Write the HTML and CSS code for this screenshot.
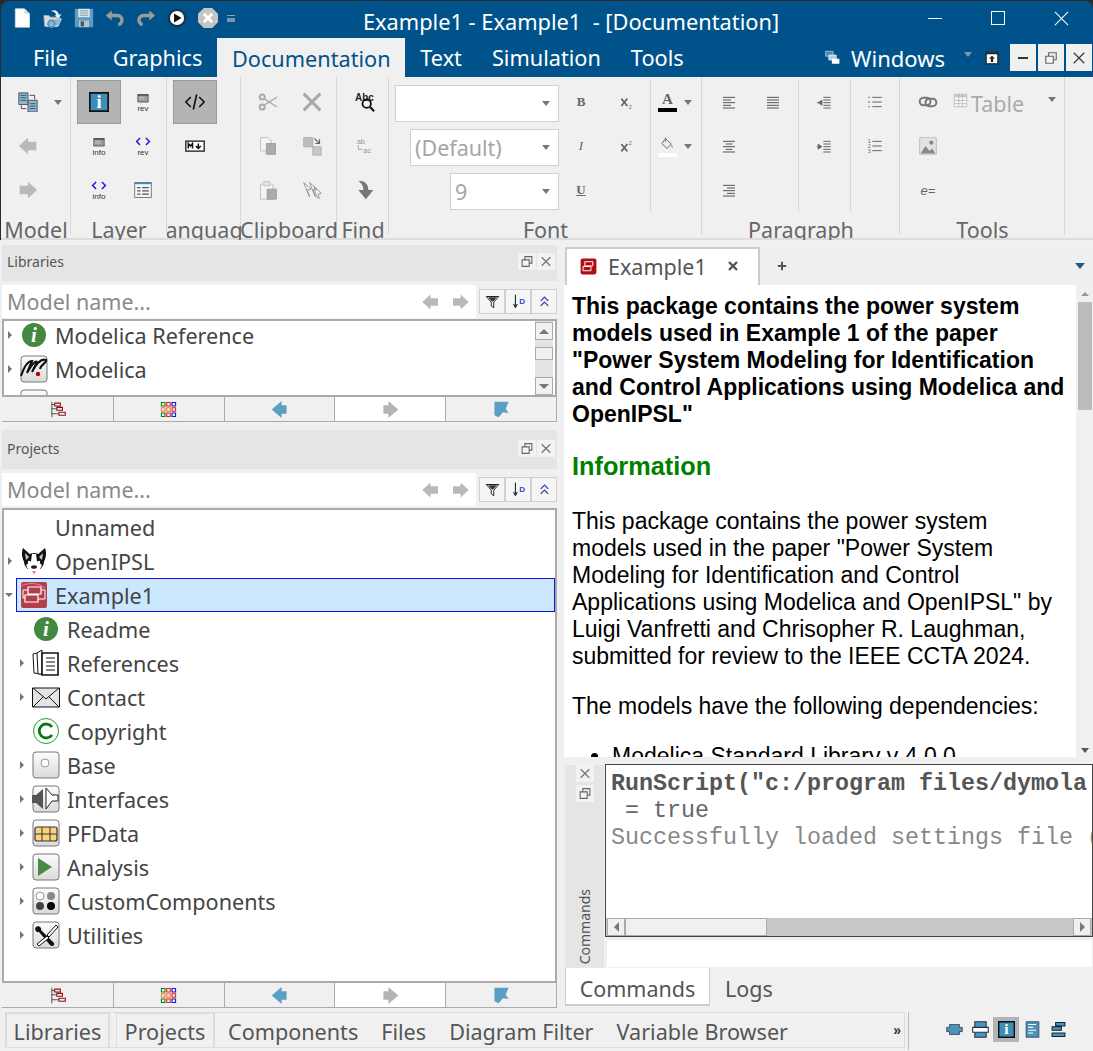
FILE: index.html
```html
<!DOCTYPE html>
<html lang="en">
<head>
<meta charset="utf-8">
<title>Example1 - Example1 - [Documentation]</title>
<link rel="stylesheet" href="styles.css">
</head>
<body>
<svg class="defs" aria-hidden="true">
  <symbol id="new" viewBox="0 0 24 24"><path d="M4 1h11l6 6v16H4z" fill="#fff" stroke="#ddd"/><path d="M15 1v6h6z" fill="#cfd8df"/></symbol>
  <symbol id="open" viewBox="0 0 24 24"><path d="M1 9h6l2 2h8v11H2z" fill="#d8dde0" stroke="#9ab"/><path d="M4 22l3-9h15l-4 9z" fill="#8fb3cc" stroke="#dfe7ec"/><circle cx="10" cy="19" r="4" fill="none" stroke="#4f93bb" stroke-width="2"/><path d="M9 4c5-3 9-1 10 4l3-1-3 6-5-4 2-.5c-1-3-4-5-7-4.500z" fill="#e8eef2"/></symbol>
  <symbol id="save" viewBox="0 0 24 24"><path d="M1 1h22v22H1z" fill="#5b9cc4"/><path d="M5 1h14v10H5z" fill="#dce5eb"/><path d="M7 3h10M7 5h10M7 7h10M7 9h10" stroke="#8aa"/><path d="M6 15h12v8H6z" fill="#b8c4cc"/><path d="M8 16h4v6H8z" fill="#456"/></symbol>
  <symbol id="undo" viewBox="0 0 24 24"><path d="M6 9h9c7 0 7 10 1 11" fill="none" stroke="#9a9a9a" stroke-width="4"/><path d="M1 9l7-6v12z" fill="#9a9a9a"/></symbol>
  <symbol id="redo" viewBox="0 0 24 24"><path d="M18 9H9c-7 0-7 10-1 11" fill="none" stroke="#9a9a9a" stroke-width="4"/><path d="M23 9l-7-6v12z" fill="#9a9a9a"/></symbol>
  <symbol id="play" viewBox="0 0 24 24"><circle cx="12" cy="12" r="11" fill="#16344d"/><circle cx="12" cy="12" r="8.500" fill="#fff"/><path d="M8.500 6.500l9 5.500-9 5.500z" fill="#111"/></symbol>
  <symbol id="stop" viewBox="0 0 24 24"><path d="M7 0h10l7 7v10l-7 7H7l-7-7V7z" fill="#c4c4c4"/><path d="M7 7l10 10M17 7L7 17" stroke="#fff" stroke-width="3.500"/></symbol>
  <symbol id="back" viewBox="0 0 24 24"><path d="M1 12L12 2v5h10v10H12v5z" fill="#b9b9b9"/></symbol>
  <symbol id="fwd" viewBox="0 0 24 24"><path d="M23 12L12 2v5H2v10h10v5z" fill="#b9b9b9"/></symbol>
  <symbol id="flow" viewBox="0 0 24 24"><path d="M1 1h11v14H1z" fill="#8ab9d4" stroke="#444"/><path d="M12 10h11v14H12z" fill="#8ab9d4" stroke="#444"/><path d="M3 4h7M3 7h7M3 10h7M14 14h7M14 17h7M14 20h7" stroke="#345"/><path d="M14 4h6v5M10 20H4v-4" fill="none" stroke="#333"/></symbol>
  <symbol id="form" viewBox="0 0 24 24"><path d="M3 6h18v13H3z" fill="#999" stroke="#333"/><path d="M3 6h18v2H3z" fill="#444"/><path d="M5 11h10M5 14h10" stroke="#ddd"/></symbol>
  <symbol id="code" viewBox="0 0 24 24"><path d="M7 5l-6 6 6 6M17 5l6 6-6 6" fill="none" stroke="#1414e6" stroke-width="2.400"/></symbol>
  <symbol id="table" viewBox="0 0 24 24"><path d="M2 3h20v18H2z" fill="#f5f5f5" stroke="#666"/><path d="M2 3h20v2H2z" fill="#4a88a8"/><path d="M5 9h4M11 9h8M5 13h4M11 13h8M5 17h4M11 17h8" stroke="#555" stroke-width="1.500"/></symbol>
  <symbol id="md" viewBox="0 0 24 24"><path d="M1 6h22v12H1z" fill="#fff" stroke="#111" stroke-width="1.500"/><path d="M4 15V9l2.500 3L9 9v6" fill="none" stroke="#111" stroke-width="1.800"/><path d="M16 9v5M13 12l3 3 3-3" fill="none" stroke="#111" stroke-width="1.800"/></symbol>
  <symbol id="cut" viewBox="0 0 24 24"><circle cx="5" cy="6" r="3" fill="none" stroke="#aaa" stroke-width="2.400"/><circle cx="5" cy="18" r="3" fill="none" stroke="#aaa" stroke-width="2.400"/><path d="M7 8l16 10M7 16l16-10" stroke="#aaa" stroke-width="1.600"/></symbol>
  <symbol id="del" viewBox="0 0 24 24"><path d="M2 2l20 20M22 2L2 22" stroke="#aaa" stroke-width="3.600"/></symbol>
  <symbol id="copy" viewBox="0 0 24 24"><path d="M3 2h9l4 4v12H3z" fill="#f4f4f4" stroke="#bbb"/><path d="M10 9h11v13H10z" fill="#aaa" stroke="#999"/></symbol>
  <symbol id="paste" viewBox="0 0 24 24"><path d="M3 5h15v18H3z" fill="#f4f4f4" stroke="#bbb"/><path d="M7 2h7v5H7z" fill="#e6e6e6" stroke="#bbb"/><path d="M11 11h11v12H11z" fill="#aaa" stroke="#999"/></symbol>
  <symbol id="move" viewBox="0 0 24 24"><path d="M2 2h11v11H2z" fill="#bdbdbd" stroke="#aaa"/><path d="M13 13h10v10H13z" fill="#c9c9c9" stroke="#aaa"/><path d="M15 3l6 6M21 4v5h-5" fill="none" stroke="#666" stroke-width="1.400"/></symbol>
  <symbol id="sel" viewBox="0 0 24 24"><path d="M2 3l9 8-5 1 3 8zM9 3l9 8-5 1 3 8zM15 8l8 8-4 1 2 5-3-1-2-5z" fill="#f4f4f4" stroke="#888"/></symbol>
  <symbol id="goto" viewBox="0 0 24 24"><path d="M4 1c8 0 12 4 12 11h6l-9 11-9-11h6c0-5-2-8-6-11z" fill="#777"/></symbol>
  <symbol id="bucket" viewBox="0 0 24 24"><path d="M9 4l9 9-7 7-8-8z" fill="#eee" stroke="#555" stroke-width="1.400"/><path d="M18 13c2 2 3 4 3 5s-3 1-3-1z" fill="#c97"/><path d="M9 2v8" stroke="#555"/></symbol>
  <symbol id="al" viewBox="0 0 24 24"><path d="M3 5h18M3 9h12M3 13h18M3 17h12M3 21h18" stroke="#555" stroke-width="1.500"/></symbol>
  <symbol id="aj" viewBox="0 0 24 24"><path d="M3 5h18M3 9h18M3 13h18M3 17h18M3 21h18" stroke="#555" stroke-width="1.500"/></symbol>
  <symbol id="ac" viewBox="0 0 24 24"><path d="M3 5h18M7 9h10M3 13h18M7 17h10M3 21h18" stroke="#555" stroke-width="1.500"/></symbol>
  <symbol id="ar" viewBox="0 0 24 24"><path d="M3 5h18M9 9h12M3 13h18M9 17h12M3 21h18" stroke="#555" stroke-width="1.500"/></symbol>
  <symbol id="ol" viewBox="0 0 24 24"><path d="M11 5h11M11 9h11M11 13h11M11 17h11M11 21h11" stroke="#666" stroke-width="1.500"/><path d="M9 9l-6 4 6 4zM1 13h4" fill="#666" stroke="#666"/></symbol>
  <symbol id="or" viewBox="0 0 24 24"><path d="M11 5h11M11 9h11M11 13h11M11 17h11M11 21h11" stroke="#666" stroke-width="1.500"/><path d="M3 9l6 4-6 4zM1 13h4" fill="#666" stroke="#666"/></symbol>
  <symbol id="ul" viewBox="0 0 24 24"><path d="M8 5h14M8 12h14M8 19h14" stroke="#666" stroke-width="1.500"/><path d="M3 4v2M3 11v2M3 18v2" stroke="#666" stroke-width="2"/></symbol>
  <symbol id="link" viewBox="0 0 24 24"><rect x="2" y="7" width="13" height="9" rx="4.500" fill="none" stroke="#777" stroke-width="2.400"/><rect x="9" y="8" width="13" height="9" rx="4.500" fill="none" stroke="#777" stroke-width="2.400"/></symbol>
  <symbol id="gridt" viewBox="0 0 24 24"><path d="M2 2h20v20H2z" fill="#f8f8f8" stroke="#aaa"/><path d="M2 2h20v5H2z" fill="#c9c9c9"/><path d="M2 12h20M2 17h20M9 2v20M15 2v20" stroke="#aaa"/></symbol>
  <symbol id="pic" viewBox="0 0 24 24"><path d="M2 2h20v20H2z" fill="#e3e3e3" stroke="#bbb"/><path d="M3 21l6-9 5 6 3-3 4 6z" fill="#888"/><circle cx="16" cy="8" r="2.500" fill="#888"/></symbol>
  <symbol id="filter" viewBox="0 0 24 24"><path d="M2 4h20l-8 9v9l-4-3v-6z" fill="#fff" stroke="#222" stroke-width="1.600"/><path d="M5 5h14l-6 7h-2z" fill="#333"/></symbol>
  <symbol id="coll" viewBox="0 0 24 24"><path d="M6 11l6-6 6 6M6 19l6-6 6 6" fill="none" stroke="#3344aa" stroke-width="2.200"/></symbol>
  <symbol id="float" viewBox="0 0 24 24"><path d="M8 3h13v12H8z" fill="#eee" stroke="#666" stroke-width="2"/><path d="M3 9h13v12H3z" fill="#f5f5f5" stroke="#666" stroke-width="2"/></symbol>
  <symbol id="close" viewBox="0 0 24 24"><path d="M4 4l16 16M20 4L4 20" stroke="#777" stroke-width="2.400"/></symbol>
  <symbol id="tree" viewBox="0 0 24 24"><path d="M4 1v22" stroke="#111"/><path d="M4 5h4M4 11h7M4 18h9" stroke="#111"/><path d="M8 3h8v4H8zM11 9h8v4h-8zM14 16h9v4h-9z" fill="none" stroke="#8b1010" stroke-width="1.500"/></symbol>
  <symbol id="cells" viewBox="0 0 24 24"><path d="M2 2h5v5H2zM2 17h5v5H2z" fill="none" stroke="#0a7a1a" stroke-width="1.500"/><path d="M9.500 2h5v5h-5zM9.500 17h5v5h-5zM17 9.500h5v5h-5z" fill="none" stroke="#e2231a" stroke-width="1.500"/><path d="M17 2h5v5h-5zM17 17h5v5h-5z" fill="none" stroke="#1414e6" stroke-width="1.500"/><path d="M2 9.500h5v5H2zM9.500 9.500h5v5h-5z" fill="none" stroke="#f07a30" stroke-width="1.500"/></symbol>
  <symbol id="bback" viewBox="0 0 24 24"><path d="M1 12L15 0v6h7v12h-7v6z" fill="#5a9fc4"/></symbol>
  <symbol id="bfwd" viewBox="0 0 24 24"><path d="M23 12L9 0v6H2v12h7v6z" fill="#b4b4b4"/></symbol>
  <symbol id="bmark" viewBox="0 0 24 24"><path d="M2 1h20l-4 10 4 6-8-1-6 7-6-3z" fill="#5a9fc4"/></symbol>
  <symbol id="mod" viewBox="0 0 28 28"><rect x="1" y="1" width="26" height="26" rx="3" fill="url(#bgrad)" stroke="#777"/><path d="M1 21C4 12 8 6 12 6L7 18C11 11 15 5 17 7l-5 10C15 10 21 3 26 5c1 3-5 4-6 9" fill="none" stroke="#111" stroke-width="2.100"/><circle cx="18" cy="19" r="2.200" fill="#b00"/></symbol>
  <symbol id="dog" viewBox="0 0 28 28"><ellipse cx="14" cy="15" rx="10" ry="9" fill="#111"/><path d="M3 1l9 8-7 7C2 12 1 6 3 1zM25 1l-9 8 7 7c3-4 4-10 2-15z" fill="#111"/><path d="M5 6l4 4-3 3zM23 6l-4 4 3 3z" fill="#d9c4c4"/><path d="M12 7h4l1 7 5 4-3 6-3 3h-4l-3-3-3-6 5-4z" fill="#fff"/><ellipse cx="14" cy="20" rx="3" ry="1.800" fill="#222"/><path d="M12 24h4l-2 3.500z" fill="#e58a8a"/><circle cx="9" cy="15" r="1.200" fill="#fff"/><circle cx="19" cy="15" r="1.200" fill="#fff"/></symbol>
  <symbol id="ex" viewBox="0 0 28 28"><rect x="1" y="1" width="26" height="26" rx="2" fill="#b23f4a"/><path d="M8 6h13v7H8zM5 14h13v7H5z" fill="none" stroke="#fff" stroke-width="1.200"/><path d="M8 9H3v8h2M21 9h4v9h-7" fill="none" stroke="#fff"/><path d="M1 5c8-4 18-3 24 2" fill="none" stroke="#e08aa0"/></symbol>
  <symbol id="exs" viewBox="0 0 28 28"><rect x="1" y="1" width="26" height="26" rx="3" fill="#b00d14"/><path d="M8 6h13v7H8zM5 14h13v7H5z" fill="none" stroke="#fff" stroke-width="1.600"/></symbol>
  <symbol id="book" viewBox="0 0 28 28"><path d="M1 5l8-2v22l-7-1z" fill="#fff" stroke="#111"/><path d="M5 4l5-3v24H6z" fill="#fff" stroke="#111"/><path d="M10 4h16v22H10z" fill="#fff" stroke="#111" stroke-width="1.600"/><path d="M14 9h9M14 13h9M14 17h9M14 21h9" stroke="#111"/></symbol>
  <symbol id="mail" viewBox="0 0 28 28"><path d="M0.500 5h27v19H.5z" fill="#e4e4e4" stroke="#111"/><path d="M1 5l13 11L27 5M1 24l10-10M27 24L17 14" fill="none" stroke="#111"/></symbol>
  <symbol id="copyr" viewBox="0 0 28 28"><circle cx="14" cy="14" r="12.500" fill="#fff" stroke="#2a9a2a"/><path d="M20 10a7 7 0 1 0 0 8" fill="none" stroke="#0a7a0a" stroke-width="2.800"/></symbol>
  <symbol id="base" viewBox="0 0 28 28"><rect x="1" y="1" width="26" height="26" rx="3" fill="url(#bgrad)" stroke="#777"/><circle cx="13" cy="12" r="4" fill="#fff" stroke="#999"/></symbol>
  <symbol id="iface" viewBox="0 0 28 28"><rect x="1" y="1" width="26" height="26" rx="3" fill="url(#bgrad)" stroke="#777"/><path d="M0 10h4l7-6v20l-7-6H0z" fill="#555"/><path d="M14 3l6 7h6v6h-6l-6 8z" fill="#fff" stroke="#222"/></symbol>
  <symbol id="pf" viewBox="0 0 28 28"><rect x="1" y="1" width="26" height="26" rx="3" fill="url(#bgrad)" stroke="#777"/><rect x="3" y="8" width="22" height="14" rx="2" fill="#fbd27b" stroke="#333" stroke-width="1.200"/><path d="M3 15h22M10 8v14M18 8v14" stroke="#333"/></symbol>
  <symbol id="ana" viewBox="0 0 28 28"><rect x="1" y="1" width="26" height="26" rx="3" fill="url(#bgrad)" stroke="#777"/><path d="M6 5l14 9-14 9z" fill="#4a8a46"/></symbol>
  <symbol id="cust" viewBox="0 0 28 28"><rect x="1" y="1" width="26" height="26" rx="3" fill="url(#bgrad)" stroke="#777"/><circle cx="8" cy="9" r="4" fill="#fff" stroke="#999"/><circle cx="19" cy="9" r="4" fill="#888"/><circle cx="8" cy="19" r="4" fill="#444"/><circle cx="19" cy="19" r="4" fill="#000"/></symbol>
  <symbol id="util" viewBox="0 0 28 28"><rect x="1" y="1" width="26" height="26" rx="3" fill="url(#bgrad)" stroke="#777"/><path d="M4 6c2-2 6 0 5 3l13 13c1 3-2 4-4 2L7 11C4 12 2 8 4 6z" fill="#111"/><path d="M24 4l2 2-9 10-2-2zM15 15L5 23l2 2 10-8z" fill="#fff" stroke="#111"/></symbol>
  <symbol id="w1" viewBox="0 0 24 24"><path d="M1 9h4V5h14v4h4v6h-4v4H5v-4H1z" fill="#4a93bb" stroke="#234"/></symbol>
  <symbol id="w2" viewBox="0 0 24 24"><path d="M4 1h16v9H4zM4 14h16v9H4z" fill="#4a93bb" stroke="#234" stroke-width="1.500"/><path d="M1 9h22v7H1z" fill="#fff" stroke="#234" stroke-width="1.500"/></symbol>
  <symbol id="w4" viewBox="0 0 24 24"><path d="M3 1h18v22H3z" fill="#4a93bb" stroke="#234"/><path d="M6 5h11M6 9h7M6 13h11M6 17h7" stroke="#fff" stroke-width="1.600"/></symbol>
  <symbol id="w5" viewBox="0 0 24 24"><path d="M8 2h13v5H8zM3 8h13v5H3z" fill="#4a93bb" stroke="#123" stroke-width="1.500"/><path d="M3 17h18v5H3z" fill="#4a93bb" stroke="#123" stroke-width="1.500"/></symbol>
  <symbol id="win" viewBox="0 0 24 24"><path d="M1 2h12v8H1z" fill="#3d8db8" stroke="#cde"/><path d="M6 8h12v8H6z" fill="#bcd" stroke="#fff"/><path d="M11 14h12v8H11z" fill="#fff"/></symbol>
  <symbol id="pin" viewBox="0 0 24 24"><path d="M2 2h20v20H2z" fill="#fff" stroke="#222" stroke-width="2"/><path d="M2 4h20" stroke="#222" stroke-width="3"/><path d="M12 8l-5 5h3v6h4v-6h3z" fill="#222"/></symbol>
  <linearGradient id="bgrad" x1="0" y1="0" x2="0" y2="1"><stop offset="0" stop-color="#fdfdfd"/><stop offset="1" stop-color="#dadada"/></linearGradient>
</svg>

<div class="app">
  <header class="title">
    <div class="quick">
      <svg class="qi"><use href="#new"/></svg>
      <svg class="qi"><use href="#open"/></svg>
      <svg class="qi"><use href="#save"/></svg>
      <svg class="qi"><use href="#undo"/></svg>
      <svg class="qi"><use href="#redo"/></svg>
      <svg class="qi"><use href="#play"/></svg>
      <svg class="qi"><use href="#stop"/></svg>
      <span class="qmore"></span>
    </div>
    <div class="title-text">Example1 - Example1 &nbsp;- [Documentation]</div>
    <div class="winctl">
      <span class="wc wc-min"></span>
      <span class="wc wc-max"></span>
      <svg class="wc-x" viewBox="0 0 16 16"><path d="M1 1l14 14M15 1L1 15" stroke="#fff" stroke-width="1.100"/></svg>
    </div>
  </header>

  <nav class="menu">
    <span class="mi mi-file">File</span>
    <span class="mi mi-gfx">Graphics</span>
    <span class="mi mi-doc">Documentation</span>
    <span class="mi mi-text">Text</span>
    <span class="mi mi-sim">Simulation</span>
    <span class="mi">Tools</span>
    <span class="menu-fill"></span>
    <svg class="mwin"><use href="#win"/></svg>
    <span class="mi mi-win">Windows</span>
    <span class="caret caret-menu"></span>
    <svg class="mpin"><use href="#pin"/></svg>
    <span class="mbtns">
      <span class="mb"><span class="mb-min"></span></span>
      <span class="mb"><svg class="mb-ic"><use href="#float"/></svg></span>
      <span class="mb"><svg class="mb-ic" viewBox="0 0 16 16"><path d="M2 2l12 12M14 2L2 14" stroke="#333" stroke-width="1.300"/></svg></span>
    </span>
  </nav>

  <section class="ribbon">
    <div class="rg rg-model">
      <div class="rb cols-model">
        <span class="cell"><svg class="ri"><use href="#flow"/></svg></span><span class="cell"><span class="caret"></span></span>
        <span class="cell"><svg class="ri"><use href="#back"/></svg></span><span></span>
        <span class="cell"><svg class="ri"><use href="#fwd"/></svg></span><span></span>
      </div>
      <div class="rl">Model</div>
    </div>
    <div class="rg rg-layer">
      <div class="rb cols-2">
        <span class="cell on"><svg class="ri" viewBox="0 0 24 24"><path d="M1 1h22v22H1z" fill="#3d8db8" stroke="#111" stroke-width="2"/><text x="12" y="19" class="infoi">i</text></svg></span>
        <span class="cell"><span class="stack"><svg class="ri-form"><use href="#form"/></svg><span class="cap">rev</span></span></span>
        <span class="cell"><span class="stack"><svg class="ri-form"><use href="#form"/></svg><span class="cap">info</span></span></span>
        <span class="cell"><span class="stack"><svg class="ri-form"><use href="#code"/></svg><span class="cap">rev</span></span></span>
        <span class="cell"><span class="stack"><svg class="ri-form"><use href="#code"/></svg><span class="cap">info</span></span></span>
        <span class="cell"><svg class="ri"><use href="#table"/></svg></span>
      </div>
      <div class="rl">Layer</div>
    </div>
    <div class="rg rg-lang">
      <div class="rb cols-1">
        <span class="cell on"><svg class="ri" viewBox="0 0 24 24"><path d="M7 6l-6 6 6 6M17 6l6 6-6 6M14 3l-4 18" fill="none" stroke="#111" stroke-width="2"/></svg></span>
        <span class="cell"><svg class="ri"><use href="#md"/></svg></span>
      </div>
      <div class="rl">Language</div>
    </div>
    <div class="rg rg-clip">
      <div class="rb cols-2">
        <span class="cell"><svg class="ri"><use href="#cut"/></svg></span>
        <span class="cell"><svg class="ri"><use href="#del"/></svg></span>
        <span class="cell"><svg class="ri"><use href="#copy"/></svg></span>
        <span class="cell"><svg class="ri"><use href="#move"/></svg></span>
        <span class="cell"><svg class="ri"><use href="#paste"/></svg></span>
        <span class="cell"><svg class="ri"><use href="#sel"/></svg></span>
      </div>
      <div class="rl">Clipboard</div>
    </div>
    <div class="rg rg-find">
      <div class="rb cols-1">
        <span class="cell"><svg class="ri" viewBox="0 0 24 24"><text x="0" y="11" class="abc">Abc</text><circle cx="14" cy="14" r="5" fill="none" stroke="#111" stroke-width="2.200"/><path d="M18 18l5 5" stroke="#111" stroke-width="2.500"/></svg></span>
        <span class="cell"><svg class="ri" viewBox="0 0 24 24"><text x="2" y="9" class="rp">ab</text><text x="10" y="20" class="rp">ac</text><path d="M4 11v5h5" fill="none" stroke="#999"/></svg></span>
        <span class="cell"><svg class="ri"><use href="#goto"/></svg></span>
      </div>
      <div class="rl">Find</div>
    </div>
    <div class="rg rg-font">
      <div class="rb rb-flex">
        <div class="sub sub-combo">
          <div class="combos">
            <div class="combo c1"><span class="caret"></span></div>
            <div class="combo c2"><span class="combo-t">(Default)</span><span class="caret"></span></div>
            <div class="combo c3"><span class="combo-t">9</span><span class="caret"></span></div>
          </div>
          <div class="cols-fmt">
            <span class="cell"><span class="fx fx-b">B</span></span>
            <span class="cell"><svg class="ri-s" viewBox="0 0 24 24"><path d="M5 7l9 11M14 7l-9 11" stroke="#666" stroke-width="2.600"/><text x="16" y="22" class="mini">2</text></svg></span>
            <span class="cell"><span class="fx fx-i">I</span></span>
            <span class="cell"><svg class="ri-s" viewBox="0 0 24 24"><path d="M5 9l9 11M14 9l-9 11" stroke="#666" stroke-width="2.600"/><text x="16" y="10" class="mini">2</text></svg></span>
            <span class="cell"><span class="fx fx-u">U</span></span>
          </div>
        </div>
        <div class="sub-color">
          <div class="color-row">
            <span class="swatch"><span class="fx-a">A</span><span class="bar bar-k"></span></span><span class="caret"></span>
          </div>
          <div class="color-row">
            <span class="swatch"><svg class="ri-bk"><use href="#bucket"/></svg><span class="bar bar-w"></span></span><span class="caret"></span>
          </div>
        </div>
      </div>
      <div class="rl">Font</div>
    </div>
    <div class="rg rg-para">
      <div class="rb rb-flex">
        <div class="cols-2 sub sub-a">
          <span class="cell"><svg class="ri-m"><use href="#al"/></svg></span>
          <span class="cell"><svg class="ri-m"><use href="#aj"/></svg></span>
          <span class="cell"><svg class="ri-m"><use href="#ac"/></svg></span><span></span>
          <span class="cell"><svg class="ri-m"><use href="#ar"/></svg></span><span></span>
        </div>
        <div class="cols-1 sub sub-b">
          <span class="cell"><svg class="ri-m"><use href="#ol"/></svg></span>
          <span class="cell"><svg class="ri-m"><use href="#or"/></svg></span>
        </div>
        <div class="cols-1 sub-c">
          <span class="cell"><svg class="ri-m"><use href="#ul"/></svg></span>
          <span class="cell"><svg class="ri-m" viewBox="0 0 24 24"><path d="M8 5h14M8 12h14M8 19h14" stroke="#666" stroke-width="1.500"/><text x="1" y="8" class="mini">1</text><text x="1" y="15" class="mini">2</text><text x="1" y="22" class="mini">3</text></svg></span>
        </div>
      </div>
      <div class="rl">Paragraph</div>
    </div>
    <div class="rg rg-tools">
      <div class="rb cols-tools">
        <span class="cell"><svg class="ri"><use href="#link"/></svg></span>
        <span class="tbl"><svg class="ri-t"><use href="#gridt"/></svg><span class="tbl-t">Table</span><span class="caret caret-t"></span></span>
        <span class="cell"><svg class="ri"><use href="#pic"/></svg></span><span></span>
        <span class="cell"><span class="eeq">e=</span></span><span></span>
      </div>
      <div class="rl">Tools</div>
    </div>
    <div class="rg-rest"></div>
  </section>

  <main class="main">
    <div class="left">
      <section class="panel panel-lib">
        <div class="dock-h"><span class="dock-t">Libraries</span><svg class="dock-i"><use href="#float"/></svg><svg class="dock-i"><use href="#close"/></svg></div>
        <div class="search">
          <div class="search-in"><span class="ph">Model name...</span><svg class="sa"><use href="#back"/></svg><svg class="sa"><use href="#fwd"/></svg></div>
          <span class="sb"><svg class="sb-i"><use href="#filter"/></svg></span><span class="sb"><svg class="sb-i" viewBox="0 0 24 24"><path d="M7 1v19M4 16l3 6 3-6" fill="none" stroke="#111" stroke-width="1.600"/><text x="13" y="16" class="dd">D</text></svg></span><span class="sb"><svg class="sb-i"><use href="#coll"/></svg></span>
        </div>
        <div class="tree tree-lib">
          <div class="rows">
            <div class="row"><span class="tw"></span><span class="tc"><svg class="ti" viewBox="0 0 28 28"><circle cx="14" cy="14" r="12" fill="#43883f"/><text x="14" y="21" class="gi">i</text></svg>Modelica Reference</span></div>
            <div class="row"><span class="tw"></span><span class="tc"><svg class="ti"><use href="#mod"/></svg>Modelica</span></div>
            <div class="row"><span class="tw"></span><span class="tc"><svg class="ti"><use href="#base"/></svg></span></div>
          </div>
          <div class="vsb">
            <span class="vb"><span class="up"></span></span>
            <span class="vthumb"></span>
            <span class="vtrack"></span>
            <span class="vb"><span class="dn"></span></span>
          </div>
        </div>
        <div class="strip">
          <span class="st-t"><svg class="st-i"><use href="#tree"/></svg></span>
          <span class="st-t"><svg class="st-i"><use href="#cells"/></svg></span>
          <span class="st-t"><svg class="st-i"><use href="#bback"/></svg></span>
          <span class="st-t st-on"><svg class="st-i"><use href="#bfwd"/></svg></span>
          <span class="st-t"><svg class="st-i"><use href="#bmark"/></svg></span>
        </div>
      </section>

      <section class="panel panel-prj">
        <div class="dock-h dock-h2"><span class="dock-t">Projects</span><svg class="dock-i"><use href="#float"/></svg><svg class="dock-i"><use href="#close"/></svg></div>
        <div class="search">
          <div class="search-in"><span class="ph">Model name...</span><svg class="sa"><use href="#back"/></svg><svg class="sa"><use href="#fwd"/></svg></div>
          <span class="sb"><svg class="sb-i"><use href="#filter"/></svg></span><span class="sb"><svg class="sb-i" viewBox="0 0 24 24"><path d="M7 1v19M4 16l3 6 3-6" fill="none" stroke="#111" stroke-width="1.600"/><text x="13" y="16" class="dd">D</text></svg></span><span class="sb"><svg class="sb-i"><use href="#coll"/></svg></span>
        </div>
        <div class="tree tree-prj">
          <div class="rows">
            <div class="row"><span class="tw-e"></span><span class="tc"><span class="ti"></span>Unnamed</span></div>
            <div class="row"><span class="tw"></span><span class="tc"><svg class="ti"><use href="#dog"/></svg>OpenIPSL</span></div>
            <div class="row"><span class="tw tw-open"></span><span class="tc tc-sel"><svg class="ti"><use href="#ex"/></svg>Example1</span></div>
            <div class="row d1"><span class="tw-e"></span><span class="tc"><svg class="ti" viewBox="0 0 28 28"><circle cx="14" cy="14" r="12" fill="#43883f"/><text x="14" y="21" class="gi">i</text></svg>Readme</span></div>
            <div class="row d1"><span class="tw"></span><span class="tc"><svg class="ti"><use href="#book"/></svg>References</span></div>
            <div class="row d1"><span class="tw"></span><span class="tc"><svg class="ti"><use href="#mail"/></svg>Contact</span></div>
            <div class="row d1"><span class="tw-e"></span><span class="tc"><svg class="ti"><use href="#copyr"/></svg>Copyright</span></div>
            <div class="row d1"><span class="tw"></span><span class="tc"><svg class="ti"><use href="#base"/></svg>Base</span></div>
            <div class="row d1"><span class="tw"></span><span class="tc"><svg class="ti"><use href="#iface"/></svg>Interfaces</span></div>
            <div class="row d1"><span class="tw"></span><span class="tc"><svg class="ti"><use href="#pf"/></svg>PFData</span></div>
            <div class="row d1"><span class="tw"></span><span class="tc"><svg class="ti"><use href="#ana"/></svg>Analysis</span></div>
            <div class="row d1"><span class="tw"></span><span class="tc"><svg class="ti"><use href="#cust"/></svg>CustomComponents</span></div>
            <div class="row d1"><span class="tw"></span><span class="tc"><svg class="ti"><use href="#util"/></svg>Utilities</span></div>
          </div>
        </div>
        <div class="strip">
          <span class="st-t"><svg class="st-i"><use href="#tree"/></svg></span>
          <span class="st-t"><svg class="st-i"><use href="#cells"/></svg></span>
          <span class="st-t"><svg class="st-i"><use href="#bback"/></svg></span>
          <span class="st-t st-on"><svg class="st-i"><use href="#bfwd"/></svg></span>
          <span class="st-t"><svg class="st-i"><use href="#bmark"/></svg></span>
        </div>
      </section>
    </div>

    <div class="right">
      <div class="tabbar">
        <div class="doc-tab"><svg class="dt-i"><use href="#exs"/></svg><span class="dt-t">Example1</span><svg class="dt-x" viewBox="0 0 12 12"><path d="M2 2l8 8M10 2l-8 8" stroke="#555" stroke-width="2.400"/></svg></div>
        <svg class="dt-plus" viewBox="0 0 12 12"><path d="M6 1v10M1 6h10" stroke="#555" stroke-width="2.400"/></svg>
        <span class="tab-fill"></span>
        <span class="tab-menu"></span>
      </div>
      <div class="docarea">
        <article class="doc">
          <h1>This package contains the power system models used in Example 1 of the paper "Power System Modeling for Identification and Control Applications using Modelica and OpenIPSL"</h1>
          <h2>Information</h2>
          <p>This package contains the power system models used in the paper "Power System Modeling for Identification and Control Applications using Modelica and OpenIPSL" by Luigi Vanfretti and Chrisopher R. Laughman, submitted for review to the IEEE CCTA 2024.</p>
          <p>The models have the following dependencies:</p>
          <ul><li>Modelica Standard Library v 4.0.0</li></ul>
        </article>
        <div class="docsb">
          <span class="up up-s"></span>
          <span class="docthumb"></span>
          <span class="docfill"></span>
          <span class="dn dn-s"></span>
        </div>
      </div>
      <div class="console">
        <div class="side">
          <div class="side-btns"><svg class="side-i"><use href="#close"/></svg><svg class="side-i"><use href="#float"/></svg></div>
          <span class="side-t">Commands</span>
        </div>
        <div class="cmd">
          <div class="cmd-box">
            <pre class="cmd-out"><b>RunScript("c:/program files/dymola</b>
<span class="c-true"> = true</span>
<span class="c-msg">Successfully loaded settings file (</span></pre>
            <div class="hsb">
              <span class="hb"><span class="lt"></span></span>
              <span class="hthumb"></span>
              <span class="htrack"></span>
              <span class="hb"><span class="rt"></span></span>
            </div>
          </div>
          <div class="cmd-in"></div>
        </div>
      </div>
      <div class="ctabs">
        <span class="ctab ctab-on">Commands</span>
        <span class="ctab ctab-logs">Logs</span>
      </div>
    </div>
  </main>

  <footer class="bottom">
    <div class="btabs">
      <span class="bt bt-box">Libraries</span>
      <span class="bt bt-box bt-2">Projects</span>
      <span class="bt bt-c">Components</span>
      <span class="bt bt-f">Files</span>
      <span class="bt bt-d">Diagram Filter</span>
      <span class="bt bt-v">Variable Browser</span>
      <span class="bt-fill"></span>
      <span class="bt-more">»</span>
    </div>
    <span class="bsep"></span>
    <div class="views">
      <span class="vw"><svg class="vw-i"><use href="#w1"/></svg></span>
      <span class="vw"><svg class="vw-i"><use href="#w2"/></svg></span>
      <span class="vw vw-on"><svg class="vw-i" viewBox="0 0 24 24"><path d="M1 1h22v22H1z" fill="#3d8db8" stroke="#111" stroke-width="2"/><text x="12" y="19" class="infoi">i</text></svg></span>
      <span class="vw"><svg class="vw-i"><use href="#w4"/></svg></span>
      <span class="vw"><svg class="vw-i"><use href="#w5"/></svg></span>
    </div>
  </footer>
</div>
</body>
</html>
```

FILE: styles.css
```css
* { box-sizing: border-box; }
html, body { margin: 0; padding: 0; }
body {
  width: 1093px; height: 1051px; overflow: hidden;
  background: #2b2b2b;
  font-family: "Noto Sans", "Open Sans", sans-serif;
  color: #444;
}
.defs { width: 0; height: 0; display: block; overflow: hidden; }
svg text { font-family: "Liberation Sans", sans-serif; }
svg text.infoi { font-family: "Liberation Serif", serif; font-size: 22px; font-weight: 700; fill: #fff; text-anchor: middle; }
.abc { font-size: 12px; font-weight: 700; fill: #222; }
.rp { font-size: 9px; fill: #999; }
.mini { font-size: 8px; fill: #666; }
.dd { font-size: 13px; font-weight: 700; fill: #3344cc; }
svg text.gi { font-family: "Liberation Serif", serif; font-size: 21px; font-weight: 700; font-style: italic; fill: #fff; text-anchor: middle; }

.app { width: 1093px; height: 1051px; display: flex; flex-direction: column; padding-top: 1px; }

/* title */
.title { height: 37px; flex: none; background: #00538a; display: flex; align-items: center; color: #fff; border-radius: 8px 8px 0 0; margin-left: 1px; }
.quick { width: 330px; display: flex; align-items: center; padding: 0 0 3px 11px; gap: 11px; }
.qi { width: 20px; height: 20px; flex: none; }
.qmore { width: 8px; height: 7px; border-top: 1px solid #8aa; margin-left: -2px; border-bottom: 4px solid #7e97a8; }
.title-text { font-size: 21.8px; width: 480px; text-align: center; white-space: nowrap; padding-top: 4px; }
.winctl { flex: 1; display: flex; align-items: center; padding: 0 0 3px 117px; }
.wc { display: block; }
.wc-min { width: 14px; height: 1px; background: #fff; }
.wc-max { width: 14px; height: 14px; border: 1px solid #fff; margin-left: 49px; }
.wc-x { width: 15px; height: 15px; margin-left: 49px; }

/* menu */
.menu { height: 39px; flex: none; background: #00538a; display: flex; align-items: center; color: #fff; font-size: 21.7px; margin-left: 1px; white-space: nowrap; }
.mi { display: block; }
.mi-file { margin-left: 32px; }
.mi-gfx { margin-left: 45px; }
.mi-doc { background: #f0f0f0; color: #00538a; height: 39px; line-height: 41px; margin-left: 15px; width: 188px; text-align: center; }
.mi-text { margin-left: 15px; }
.mi-sim { margin-left: 30px; }
.mi-sim + .mi { margin-left: 30px; }
.menu-fill { flex: 1; }
.mwin { width: 15px; height: 15px; margin-right: 11px; }
.mi-win { font-size: 22px; }
.caret { display: block; width: 0; height: 0; border: 4px solid transparent; border-top: 5px solid #777; border-bottom: 0; flex: none; }
.caret-menu { border-top-color: #7b98ab; margin-left: 19px; margin-bottom: 6px; }
.mpin { width: 14px; height: 14px; margin-left: 13px; }
.mbtns { display: flex; gap: 2px; margin: 0 1px 0 11px; }
.mb { width: 26px; height: 27px; background: #f0f0f0; display: flex; align-items: center; justify-content: center; }
.mb-min { width: 10px; height: 2px; background: #333; }
.mb-ic { width: 14px; height: 14px; }

/* ribbon */
.ribbon { height: 163px; flex: none; background: #f0f0f0; display: flex; border-bottom: 2px solid #dcdcdc; margin-left: 1px; }
.rg { display: flex; flex-direction: column; height: 161px; flex: none; background: linear-gradient(#d8d8d8, #d8d8d8) right top / 1px 158px no-repeat; }
.rb { height: 137px; flex: none; padding-top: 3px; display: grid; grid-auto-rows: 44px; }
.rb-flex { display: flex; }
.rl { height: 30px; flex: none; line-height: 30px; margin-top: 1px; font-size: 21.5px; color: #666; white-space: nowrap; display: flex; justify-content: center; }
.rg-lang .rl { overflow: hidden; padding: 0 1px 0 2px; }
.rg-model { width: 70px; }
.rg-layer { width: 96px; }
.rg-lang { width: 74px; }
.rg-clip { width: 96px; }
.rg-find { width: 52px; }
.rg-font { width: 313px; }
.rg-para { width: 198px; }
.rg-tools { width: 165px; }
.rg-rest { flex: 1; }
.cols-model { grid-template-columns: 44px 16px; padding-left: 5px; }
.rg-layer .rb, .rg-lang .rb, .rg-find .rb { padding-left: 6px; }
.rg-clip .rb { padding-left: 5px; }
.rb.cols-2, .rb.cols-1 { display: grid; }
.cols-2 { display: grid; grid-template-columns: 44px 44px; grid-auto-rows: 44px; }
.cols-1 { display: grid; grid-template-columns: 44px; grid-auto-rows: 44px; }
.cell { display: flex; align-items: center; justify-content: center; }
.cell.on { background: #b4b4b4; border: 1px solid #999; }
.ri { width: 20px; height: 20px; display: block; }
.ri-form { width: 18px; height: 14px; display: block; }
.ri-s { width: 16px; height: 16px; }
.ri-m { width: 16px; height: 16px; }
.stack { display: flex; flex-direction: column; align-items: center; }
.cap { font: 8px/8px "Liberation Sans", sans-serif; color: #333; }
.sub { border-right: 1px solid #d8d8d8; height: 132px; }
.sub-combo { width: 262px; display: flex; padding-left: 6px; }
.combos { width: 164px; display: flex; flex-direction: column; align-items: flex-end; gap: 7px; padding-top: 5px; }
.combo { height: 37px; background: #fff; border: 1px solid #d0d0d0; display: flex; align-items: center; justify-content: space-between; padding: 0 8px 0 4px; flex: none; font-size: 21.5px; color: #a5a5a5; white-space: nowrap; }
.c1 { width: 164px; justify-content: flex-end; }
.c2 { width: 149px; }
.c3 { width: 109px; }
.cols-fmt { display: grid; grid-template-columns: 44px 45px; grid-auto-rows: 44px; }
.fx { font-family: "Liberation Serif", serif; font-size: 13px; color: #666; }
.fx-b { font-weight: 700; }
.fx-i { font-style: italic; }
.fx-u { font-weight: 700; text-decoration: underline; }
.sub-color { flex: 1; }
.color-row { height: 44px; display: flex; align-items: center; padding-left: 7px; gap: 7px; }
.swatch { display: flex; flex-direction: column; align-items: center; width: 19px; }
.fx-a { font: 700 15px/14px "Liberation Serif", serif; color: #666; }
.ri-bk { width: 17px; height: 15px; }
.bar { width: 19px; height: 4px; margin-top: 2px; }
.bar-k { background: #000; }
.bar-w { background: #fff; }
.sub-a { width: 97px; padding-left: 5px; }
.sub-b { width: 52px; padding-left: 3px; }
.sub-c { padding-left: 2px; }
.cols-tools { grid-template-columns: 44px 120px; padding-left: 6px; }
.tbl { display: flex; align-items: center; margin-left: 3px; font-size: 21.5px; color: #aaa; padding-top: 3px; }
.ri-t { width: 15px; height: 15px; margin-bottom: 6px; }
.tbl-t { margin-left: 3px; }
.caret-t { margin-left: 24px; margin-bottom: 8px; }
.eeq { font: italic 13px "Liberation Sans", sans-serif; color: #666; }

/* main */
.main { height: 770px; flex: none; display: flex; background: #f0f0f0; }
.left { width: 563px; flex: none; padding: 5px 6px 0 2px; display: flex; flex-direction: column; gap: 8px; }
.panel { display: flex; flex-direction: column; }
.panel-prj { height: 578px; }
.dock-h { height: 36px; background: #e5e5e5; display: flex; align-items: center; padding: 0 2px 3px 5px; gap: 1px; }
.dock-h2 { height: 39px; }
.dock-t { flex: 1; font-size: 14px; color: #555; }
.dock-i { width: 18px; height: 17px; background: #f2f2f2; padding: 2px; }
.search { height: 35px; margin-top: 3px; display: flex; align-items: center; }
.search-in { width: 474px; height: 33px; background: #fff; display: flex; align-items: center; padding: 0 1px 0 5px; margin-right: 3px; flex: none; }
.ph { flex: 1; font-size: 21.5px; color: #8a8a8a; }
.sa { width: 21px; height: 18px; margin-right: 9px; }
.sa:last-child { margin-right: 4px; }
.sb { width: 26px; height: 25px; background: #f5f5f5; border: 1px solid #d0d0d0; display: flex; align-items: center; justify-content: center; }
.sb-i { width: 15px; height: 15px; }
.tree { border: 2px solid #aaa; background: #fff; display: flex; overflow: hidden; font-size: 21.6px; color: #444; }
.tree-lib { height: 78px; margin-top: 0; }
.tree-lib .rows { margin-top: -3px; }
.tree-prj { height: 475px; margin-top: 1px; }
.rows { flex: 1; min-width: 0; }
.row { height: 34px; display: flex; align-items: center; white-space: nowrap; padding-left: 1px; }
.row.d1 { padding-left: 13px; }
.tw { width: 11px; height: 34px; display: flex; align-items: center; flex: none; }
.tw::before { content: ""; margin-left: 3px; border: 4px solid transparent; border-left: 4px solid #777; border-right: 0; }
.tw-open::before { margin-left: 0; border: 4px solid transparent; border-top: 4px solid #777; border-bottom: 0; }
.tw-e { width: 11px; flex: none; }
.tc { display: flex; align-items: center; flex: 1; height: 34px; padding-left: 4px; gap: 7px; }
.tc-sel { background: #cce8ff; border: 1px solid #1212e0; padding-left: 3px; }
.ti { width: 28px; height: 28px; display: block; flex: none; }
.vsb { width: 18px; margin: 0 2px 0 0; flex: none; display: flex; flex-direction: column; background: #e4e4e4; padding-top: 1px; }
.vb { height: 18px; background: #f0f0f0; border: 1px solid #aaa; display: flex; align-items: center; justify-content: center; flex: none; }
.vthumb { height: 13px; margin-top: 7px; background: #f0f0f0; border: 1px solid #aaa; flex: none; }
.vtrack { flex: 1; }
.up { border: 5px solid transparent; border-bottom: 5px solid #777; border-top: 0; }
.dn { border: 5px solid transparent; border-top: 5px solid #777; border-bottom: 0; }
.lt { border: 5px solid transparent; border-right: 5px solid #777; border-left: 0; }
.rt { border: 5px solid transparent; border-left: 5px solid #777; border-right: 0; }
.strip { height: 25px; display: flex; flex: none; border-bottom: 1px solid #aaa; padding-left: 1px; }
.st-t { flex: 1; background: #f0f0f0; border-right: 1px solid #aaa; display: flex; align-items: center; justify-content: center; }
.st-on { background: #fff; }
.st-i { width: 17px; height: 17px; }

/* right */
.right { flex: 1; min-width: 0; display: flex; flex-direction: column; padding-top: 7px; }
.tabbar { height: 38px; flex: none; display: flex; background: #efefef; align-items: center; padding-left: 2px; }
.doc-tab { width: 195px; height: 38px; background: #fff; border: 2px solid #ccc; border-bottom: 0; display: flex; align-items: center; padding: 0 0 2px 13px; font-size: 21.5px; color: #555; }
.dt-i { width: 17px; height: 17px; }
.dt-t { margin-left: 11px; flex: 1; }
.dt-x { width: 12px; height: 12px; margin-right: 19px; }
.dt-plus { width: 10px; height: 10px; margin-left: 17px; }
.tab-fill { flex: 1; }
.tab-menu { border: 5px solid transparent; border-top: 6px solid #1d5a8a; border-bottom: 0; margin-right: 8px; }
.docarea { height: 472px; flex: none; display: flex; padding-left: 1px; }
.doc { width: 512px; flex: none; background: #fff; padding: 8px 0 0 8px; overflow: hidden; font: 23px/27px "Liberation Sans", sans-serif; color: #000; }
.doc h1 { font-size: 23px; line-height: 27px; font-weight: 700; margin: 0 0 25px; }
.doc h2 { font-size: 25.3px; line-height: 27px; font-weight: 700; color: #008000; margin: 0 0 28px; }
.doc p { margin: 0 0 23px; max-width: 488px; }
.doc ul { margin: 0; padding-left: 40px; }
.docsb { width: 14px; margin-left: 2px; display: flex; flex-direction: column; align-items: center; flex: none; }
.up-s { margin-top: 7px; border-width: 4px; border-bottom-color: #999; }
.docthumb { width: 14px; height: 108px; margin-top: 6px; background: #bcbcbc; }
.docfill { flex: 1; }
.dn-s { border-width: 4px; border-top-width: 5px; margin-bottom: 4px; border-top-color: #555; }
.console { height: 211px; flex: none; display: flex; }
.side { width: 39px; margin: 8px 0 0 2px; background: #e5e5e5; display: flex; flex-direction: column; align-items: center; justify-content: space-between; padding-bottom: 4px; flex: none; }
.side-btns { display: flex; flex-direction: column; gap: 3px; }
.side-i { width: 18px; height: 17px; background: #f2f2f2; padding: 2px; display: block; }
.side-t { writing-mode: vertical-rl; transform: rotate(180deg); font-size: 14px; color: #555; }
.cmd { flex: 1; min-width: 0; padding: 7px 0 0 1px; display: flex; flex-direction: column; }
.cmd-box { height: 173px; border: 1px solid #444; background: #fff; display: flex; flex-direction: column; flex: none; overflow: hidden; }
.cmd-out { flex: 1; margin: 0; padding: 6px 0 0 5px; font: 23.33px/27px "Liberation Mono", monospace; color: #5a5a5a; overflow: hidden; white-space: pre; }
.cmd-out b { color: #555; }
.c-true { color: #666; }
.c-msg { color: #888; }
.hsb { height: 18px; display: flex; background: #c8c8c8; flex: none; padding: 0 1px; }
.hb { width: 18px; background: #f0f0f0; border: 1px solid #aaa; display: flex; align-items: center; justify-content: center; flex: none; }
.hthumb { width: 142px; background: #f0f0f0; border: 1px solid #aaa; flex: none; }
.htrack { flex: 1; }
.cmd-in { height: 27px; margin: 3px 1px 0 2px; background: #fff; }
.ctabs { height: 38px; flex: none; display: flex; padding-left: 2px; font-size: 21.5px; color: #555; }
.ctab { display: block; }
.ctab-on { width: 145px; height: 38px; background: #fff; border: 1px solid #ccc; border-bottom: 2px solid #ccc; border-top: 0; line-height: 42px; text-align: center; }
.ctab-logs { margin-left: 15px; line-height: 42px; }

/* bottom */
.bottom { flex: 1; background: #f0f0f0; display: flex; padding: 2px 0 3px 5px; }
.btabs { width: 900px; flex: none; height: 36px; border: 1px solid #ddd; display: flex; align-items: center; font-size: 21.6px; color: #555; white-space: nowrap; }
.bt { display: block; margin-top: 3px; }
.bt-box { height: 35px; line-height: 35px; margin-top: 0; border: 1px solid #ddd; border-right: 2px solid #ddd; width: 104px; text-align: center; flex: none; }
.bt-2 { width: 99px; margin-left: 6px; }
.bt-c { margin-left: 13px; }
.bt-f { margin-left: 23px; }
.bt-d { margin-left: 23px; }
.bt-v { margin-left: 23px; }
.bt-fill { flex: 1; }
.bt-more { font: 700 14px "Liberation Sans", sans-serif; margin: 0 3px 0 0; color: #333; }
.bsep { width: 1px; height: 38px; background: #bbb; margin-left: 3px; flex: none; }
.views { flex: 1; display: flex; padding: 5px 0 0 32px; }
.vw { width: 26px; height: 25px; display: flex; align-items: center; justify-content: center; }
.vw-on { background: #b4b4b4; }
.vw-i { width: 17px; height: 17px; }
```
